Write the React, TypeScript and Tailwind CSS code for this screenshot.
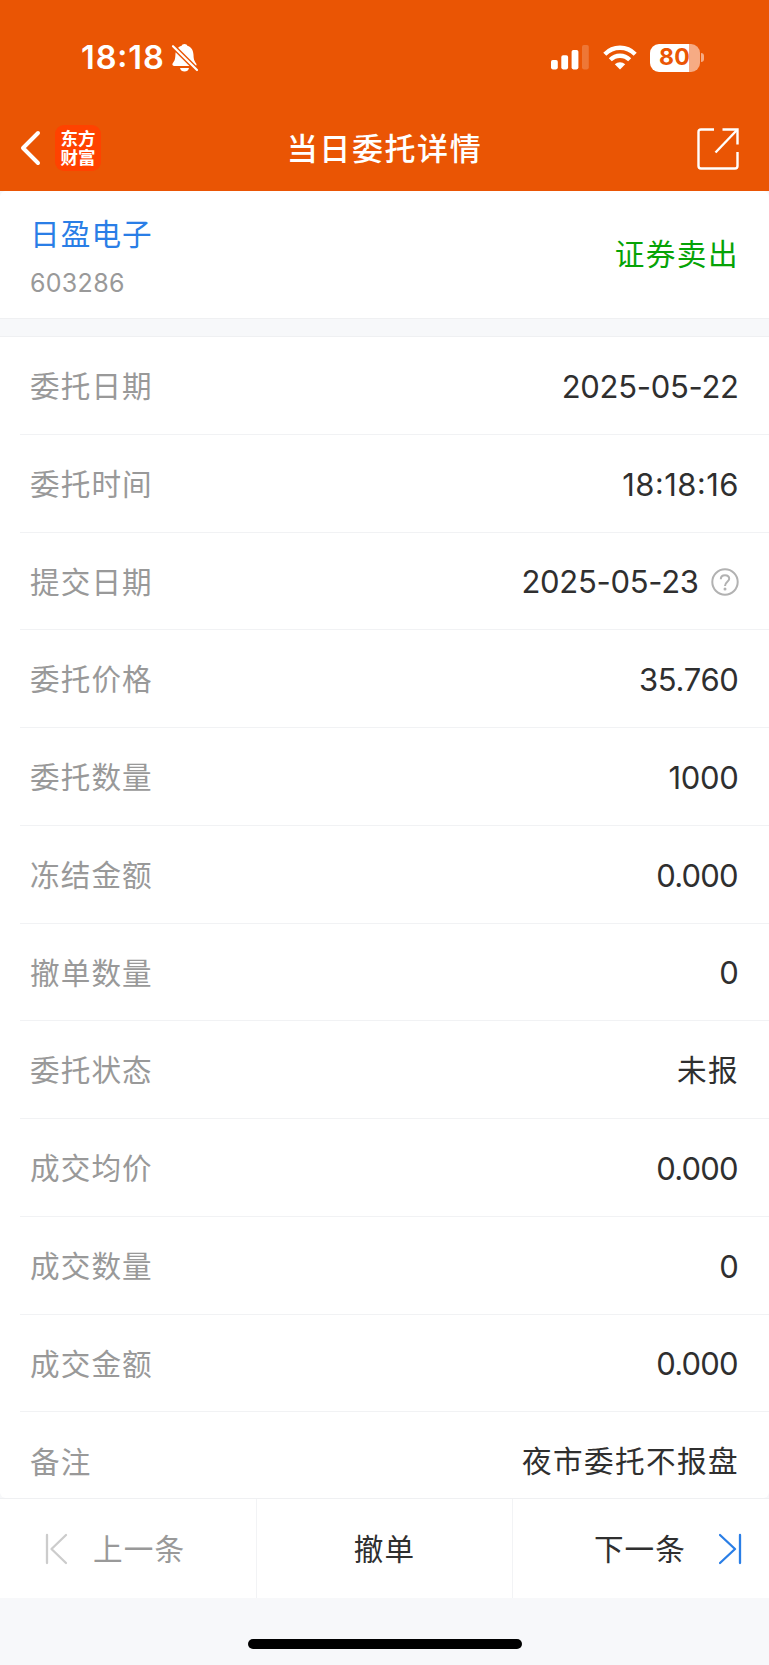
import React from 'react'
import clsx from 'clsx'

interface DetailRow {
    label: string
    value: string
    hint?: boolean
    valueClass: string
}

const cjk = 'text-[29.6px] tracking-[1.4px]'
const digits = 'text-[31px] tracking-[-0.3px] pr-[0.4px]'
const digitsWide = 'text-[31px] tracking-[0.5px]'
const digitsTight = 'text-[31px] tracking-[-0.8px] pr-[1.2px]'

const rows: DetailRow[] = [
    { label: '委托日期', value: '2025-05-22', valueClass: digits },
    { label: '委托时间', value: '18:18:16', valueClass: digitsWide },
    { label: '提交日期', value: '2025-05-23', valueClass: digits, hint: true },
    { label: '委托价格', value: '35.760', valueClass: digits },
    { label: '委托数量', value: '1000', valueClass: digits },
    { label: '冻结金额', value: '0.000', valueClass: digitsTight },
    { label: '撤单数量', value: '0', valueClass: digits },
    { label: '委托状态', value: '未报', valueClass: cjk },
    { label: '成交均价', value: '0.000', valueClass: digitsTight },
    { label: '成交数量', value: '0', valueClass: digits },
    { label: '成交金额', value: '0.000', valueClass: digitsTight },
    { label: '备注', value: '夜市委托不报盘', valueClass: cjk },
]

// Times are set with the colon raised to the middle of the digits
function TimeText({ value }: { value: string }) {
    return (
        <>
            {value.split(':').map((part, i) => (
                <React.Fragment key={i}>
                    {i > 0 && <span className="align-[2px] text-[0.97em] leading-[0.8]">:</span>}
                    {part}
                </React.Fragment>
            ))}
        </>
    )
}

function BellOffIcon() {
    return (
        <svg width="28" height="30" viewBox="0 0 28 30" fill="none">
            <path
                d="M13.5 1C12 1 10.9 1.7 10.7 2.8C6.6 4.1 4.6 7.4 4.4 12C4.2 16.5 3.4 18 2.2 19.6C0.8 21.2 1.2 23 3 23H24C25.6 23 26 21.5 25 20.2C23.4 18 22.6 16.5 22.5 12C22.3 7.4 20.4 4.1 16.3 2.8C16.1 1.7 15 1 13.5 1Z"
                fill="#fff"
            />
            <path d="M9 25H18C17.5 27.3 15.8 28.6 13.5 28.6C11.2 28.6 9.5 27.3 9 25Z" fill="#fff" />
            <path d="M1 2.2L27 28" stroke="#ea5504" strokeWidth="5" />
            <path d="M2 3.2L26 27" stroke="#fff" strokeWidth="2.2" strokeLinecap="round" />
        </svg>
    )
}

function SignalIcon() {
    return (
        <svg width="38" height="25" viewBox="0 0 38 25" fill="#fff">
            <rect x="0" y="15" width="6.8" height="9.4" rx="1.8" />
            <rect x="10.3" y="10.3" width="6.8" height="14.1" rx="1.8" />
            <rect x="20.6" y="5" width="6.8" height="19.4" rx="1.8" />
            <rect x="31" y="0" width="6.8" height="24.4" rx="1.8" opacity="0.2" />
        </svg>
    )
}

function WifiIcon() {
    return (
        <svg width="34" height="25" viewBox="0 0 34 25" fill="none" stroke="#fff" strokeWidth="4.3">
            <path d="M1.8 9.2C10.2 0.6 23.8 0.6 32.2 9.2" />
            <path d="M7.3 14.8C12.7 9.4 21.3 9.4 26.7 14.8" />
            <path d="M17 24.6L11.8 19.3C14.8 16.6 19.2 16.6 22.2 19.3Z" fill="#fff" stroke="none" />
        </svg>
    )
}

function StatusBar() {
    return (
        <div className="flex h-[106px] items-start justify-between pl-[80px] pr-[65px] pt-[42px]">
            <div className="flex h-[32px] items-center">
                <span className="w-[91px] whitespace-nowrap pl-px text-[32.5px] font-semibold leading-[30px] tracking-[0.9px]">
                    <TimeText value="18:18" />
                </span>
                <BellOffIcon />
            </div>
            <div className="flex h-[31px] items-center">
                <SignalIcon />
                <span className="ml-[14px]"><WifiIcon /></span>
                <div className="ml-[13px] flex h-[28px] w-[50px] items-center overflow-hidden rounded-[9px] bg-[linear-gradient(to_right,#fff_79%,#f6ab84_79%)] pl-[9.5px]">
                    <span className="text-[23px] font-bold leading-none tracking-[0.2px] text-[#ea5504]">80</span>
                </div>
                <div className="ml-[1.5px] h-[9px] w-[3px] rounded-r-full bg-[#f6ab84]" />
            </div>
        </div>
    )
}

function NavBar() {
    return (
        <div className="grid h-[85px] grid-cols-[1fr_auto_1fr] items-center pl-[20px] pr-[30px]">
            <div className="flex items-center pb-[2px]">
                <svg width="22" height="36" viewBox="0 0 22 36" fill="none" stroke="#fff" strokeWidth="4" strokeLinecap="round" strokeLinejoin="round">
                    <path d="M18 3L3 18L18 33" />
                </svg>
                <div className="ml-[13px] flex size-[46px] flex-col items-center justify-center rounded-[9px] bg-[#ff4200] text-[17.5px] font-bold leading-[19px]">
                    <span>东方</span>
                    <span>财富</span>
                </div>
            </div>
            <h1 className="pl-[10px] text-[31px] font-medium leading-none tracking-[1.6px]">当日委托详情</h1>
            <svg className="justify-self-end" width="42" height="42" viewBox="0 0 42 42" fill="none" stroke="#fff" strokeWidth="2.4">
                <path d="M17 1.5H4Q1.5 1.5 1.5 4V38Q1.5 40.5 4 40.5H38Q40.5 40.5 40.5 38V24" />
                <path d="M25.5 1.5H40.5V16.5" />
                <path d="M40 2L18.5 24.5" />
            </svg>
        </div>
    )
}

function HelpIcon() {
    return (
        <svg className="ml-[12px]" width="28" height="28" viewBox="0 0 28 28" fill="none" stroke="#b2b2b2" strokeWidth="2">
            <circle cx="14" cy="14" r="12.7" />
            <path d="M9.8 11.2C9.8 8.8 11.5 7.2 14 7.2C16.5 7.2 18.2 8.7 18.2 10.8C18.2 13.8 14 13.9 14 18" />
            <circle cx="14" cy="20.9" r="1.5" fill="#b2b2b2" stroke="none" />
        </svg>
    )
}

function DetailItem({ row, isLast }: { row: DetailRow; isLast: boolean }) {
    return (
        <div
            className={clsx(
                'ml-[20px] flex shrink-0 items-center justify-between pl-[10px] pr-[30px] pt-[2px]',
                isLast ? 'h-[98px]' : 'h-[97.75px] border-b border-[#f1f2f4]',
            )}
        >
            <span className="pt-px text-[29.6px] leading-none tracking-[1.1px] text-[#999]">{row.label}</span>
            <div className="flex items-center text-[#2f2f2f]">
                <span className={clsx('leading-none', row.valueClass)}>
                    {row.value.includes(':') ? <TimeText value={row.value} /> : row.value}
                </span>
                {row.hint && <HelpIcon />}
            </div>
        </div>
    )
}

function BottomBar() {
    return (
        <div className="flex h-[100px] border-t border-[#eff0f2] bg-white text-[29.6px] leading-none text-[#2f2f2f]">
            <button type="button" className="flex w-[257px] items-center border-r border-[#f2f3f5] pl-[45px] text-[#999]">
                <svg width="23" height="32" viewBox="0 0 23 32" fill="none" stroke="#ccc" strokeWidth="2.3" strokeLinecap="round" strokeLinejoin="round">
                    <path d="M2 2V30M21 2L6.5 16L21 30" />
                </svg>
                <span className="ml-[25px] pt-[3px] tracking-[1.1px]">上一条</span>
            </button>
            <button type="button" className="flex w-[256px] items-center justify-center border-r border-[#f2f3f5]">
                <span className="pt-[3px] tracking-[1.1px]">撤单</span>
            </button>
            <button type="button" className="flex flex-1 items-center justify-end pr-[27px]">
                <span className="mr-[33px] pt-[3px] tracking-[1.1px]">下一条</span>
                <svg width="23" height="32" viewBox="0 0 23 32" fill="none" stroke="#2a7ee6" strokeWidth="2.3" strokeLinecap="round" strokeLinejoin="round">
                    <path d="M21 2V30M1 2L16 16L1 30" />
                </svg>
            </button>
        </div>
    )
}

export default function App() {
    return (
        <div className="flex h-[1665px] w-[769px] flex-col overflow-hidden bg-[#f7f8fa] font-['Inter','Noto_Sans_CJK_SC',sans-serif]">
            <header className="h-[191px] shrink-0 bg-[#ea5504] text-white">
                <StatusBar />
                <NavBar />
            </header>

            {/* Security name, code and trade direction */}
            <section className="flex h-[127px] shrink-0 items-center justify-between rounded-t-[6px] bg-white pl-[30px] pr-[30px]">
                <div className="flex flex-col pt-[5px]">
                    <span className="text-[29.6px] leading-[34px] tracking-[1.1px] text-[#2a7ee6]">日盈电子</span>
                    <span className="mt-[17px] text-[25px] leading-[30px] tracking-[0.3px] text-[#999]">603286</span>
                </div>
                <span className="text-[29.6px] leading-none tracking-[1.5px] text-[#06a306]">证券卖出</span>
            </section>
            <div className="h-[19px] shrink-0 border-y border-[#eff0f2]" />

            <main className="flex h-[1161px] shrink-0 flex-col overflow-hidden rounded-b-[6px] bg-white">
                {rows.map((row, i) => (
                    <DetailItem key={row.label} row={row} isLast={i === rows.length - 1} />
                ))}
            </main>

            <BottomBar />

            {/* Home indicator */}
            <div className="flex flex-1 items-start justify-center pt-[41px]">
                <div className="h-[10px] w-[274px] rounded-full bg-black" />
            </div>
        </div>
    )
}
